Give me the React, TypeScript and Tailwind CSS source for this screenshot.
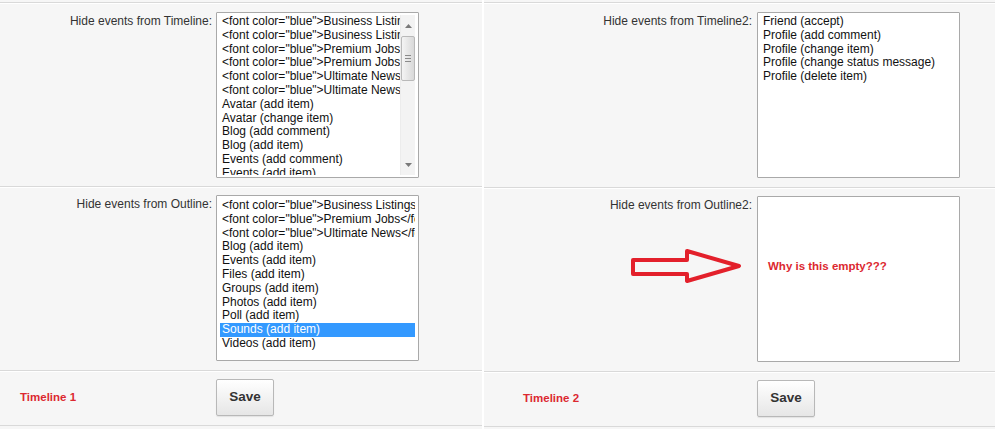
import React from "react";

const font = { fontFamily: '"Liberation Sans", Arial, sans-serif' };

const list1 = [
  '<font color="blue">Business Listings</font> (add comment)',
  '<font color="blue">Business Listings</font> (add item)',
  '<font color="blue">Premium Jobs</font> (add comment)',
  '<font color="blue">Premium Jobs</font> (add item)',
  '<font color="blue">Ultimate News</font> (add comment)',
  '<font color="blue">Ultimate News</font> (add item)',
  "Avatar (add item)",
  "Avatar (change item)",
  "Blog (add comment)",
  "Blog (add item)",
  "Events (add comment)",
  "Events (add item)",
  "Files (add item)",
];

const list2 = [
  '<font color="blue">Business Listings</font> (add item)',
  '<font color="blue">Premium Jobs</font> (add item)',
  '<font color="blue">Ultimate News</font> (add item)',
  "Blog (add item)",
  "Events (add item)",
  "Files (add item)",
  "Groups (add item)",
  "Photos (add item)",
  "Poll (add item)",
  "Sounds (add item)",
  "Videos (add item)",
];

const list3 = [
  "Friend (accept)",
  "Profile (add comment)",
  "Profile (change item)",
  "Profile (change status message)",
  "Profile (delete item)",
];

function Scrollbar() {
  return (
    <div className="w-[15px] h-full flex flex-col bg-[#f3f3f3] border-l border-[#ececec]">
      <div className="h-[21px] flex items-center justify-center">
        <svg width="7" height="4" viewBox="0 0 7 4">
          <path d="M0 4 L3.5 0 L7 4 Z" fill="#7a7a7a" />
        </svg>
      </div>
      <div className="h-[45px] rounded-[2px] border border-[#b9b9b9] bg-gradient-to-r from-[#f4f4f4] to-[#d9d9d9] flex flex-col items-center justify-center gap-[2px]">
        <div className="w-[6px] h-px bg-[#8a8a8a]" />
        <div className="w-[6px] h-px bg-[#8a8a8a]" />
        <div className="w-[6px] h-px bg-[#8a8a8a]" />
      </div>
      <div className="flex-1" />
      <div className="h-[20px] flex items-center justify-center">
        <svg width="7" height="4" viewBox="0 0 7 4">
          <path d="M0 0 L3.5 4 L7 0 Z" fill="#7a7a7a" />
        </svg>
      </div>
    </div>
  );
}

function ListBox({
  items,
  selected,
  scroll,
  width,
  pt = "pt-[2px]",
  children,
}: {
  items: string[];
  selected?: number;
  scroll?: boolean;
  width: string;
  pt?: string;
  children?: React.ReactNode;
}) {
  return (
    <div
      className={`${width} h-[166px] shrink-0 bg-white border border-[#a9a9a9] rounded-[1px] flex pl-[3px] pr-[3px] ${pt} pb-[2px] overflow-hidden`}
    >
      <div className="flex-1 min-w-0 overflow-hidden">
        {items.map((t, i) => (
          <div
            key={i}
            className={`whitespace-nowrap text-[12px] leading-[13.8px] pl-[2px] overflow-hidden ${
              i === selected ? "bg-[#3399ff] text-white" : "text-[#111]"
            }`}
          >
            {t}
          </div>
        ))}
        {children}
      </div>
      {scroll && <Scrollbar />}
    </div>
  );
}

function Row({
  label,
  labelW,
  gap,
  pt,
  pb,
  children,
}: {
  label: string;
  labelW: string;
  gap: string;
  pt: string;
  pb: string;
  children: React.ReactNode;
}) {
  return (
    <div
      className={`flex border-t border-[#d9d9d9] shadow-[inset_0_1px_0_#ffffff] ${pt} ${pb}`}
    >
      <div
        className={`${labelW} ${gap} shrink-0 text-right text-[12px] leading-[14px] text-[#333] pt-[2px]`}
      >
        {label}
      </div>
      {children}
    </div>
  );
}

function SaveButton() {
  return (
    <button className="w-[58px] h-[37px] rounded-[2px] border border-[#b8b8b8] bg-gradient-to-b from-[#ffffff] to-[#e6e6e6] shadow-[0_1px_1px_rgba(0,0,0,0.08)] text-[13.5px] font-bold text-[#333]">
      Save
    </button>
  );
}

export default function App() {
  return (
    <div
      className="w-[995px] h-[429px] bg-white flex gap-[2px] overflow-hidden"
      style={font}
    >
      {/* Left panel */}
      <div className="w-[482px] shrink-0 bg-[#f6f6f6] pt-[2px]">
        <Row label="Hide events from Timeline:" labelW="w-[212px]" gap="mr-[4px]" pt="pt-[9px]" pb="pb-[8px]">
          <ListBox items={list1} scroll width="w-[203px]" />
        </Row>
        <Row label="Hide events from Outline:" labelW="w-[212px]" gap="mr-[4px]" pt="pt-[8px]" pb="pb-[9px]">
          <ListBox items={list2} selected={9} width="w-[203px]" pt="pt-[3px]" />
        </Row>
        <div className="flex items-center border-t border-b border-[#d9d9d9] shadow-[inset_0_1px_0_#ffffff] pt-[8px] pb-[9px]">
          <div className="w-[216px] shrink-0 pl-[20px] text-[11.5px] font-bold text-[#dc2830]">
            Timeline 1
          </div>
          <SaveButton />
        </div>
      </div>

      {/* Right panel */}
      <div className="flex-1 bg-[#f6f6f6] pt-[2px]">
        <Row label="Hide events from Timeline2:" labelW="w-[268px]" gap="mr-[5px]" pt="pt-[9px]" pb="pb-[9px]">
          <ListBox items={list3} width="w-[203px]" />
        </Row>
        <div className="relative">
          <Row label="Hide events from Outline2:" labelW="w-[268px]" gap="mr-[5px]" pt="pt-[8px]" pb="pb-[9px]">
            <ListBox items={[]} width="w-[203px]">
              <div className="pt-[59px] pl-[7px] text-[11.5px] font-bold text-[#dc2830] whitespace-nowrap">
                Why is this empty???
              </div>
            </ListBox>
          </Row>
          <svg
            className="absolute left-[145px] top-[61px]"
            width="116"
            height="40"
            viewBox="0 0 116 40"
          >
            <path
              d="M4 12 L58 12 L58 3 L110 18 L58 33 L58 26 L4 26 Z"
              fill="none"
              stroke="#e3202b"
              strokeWidth="4"
              strokeLinejoin="round"
            />
          </svg>
        </div>
        <div className="flex items-center border-t border-b border-[#d9d9d9] shadow-[inset_0_1px_0_#ffffff] pt-[8px] pb-[9px]">
          <div className="w-[273px] shrink-0 pl-[39px] text-[11.5px] font-bold text-[#dc2830]">
            Timeline 2
          </div>
          <SaveButton />
        </div>
      </div>
    </div>
  );
}
